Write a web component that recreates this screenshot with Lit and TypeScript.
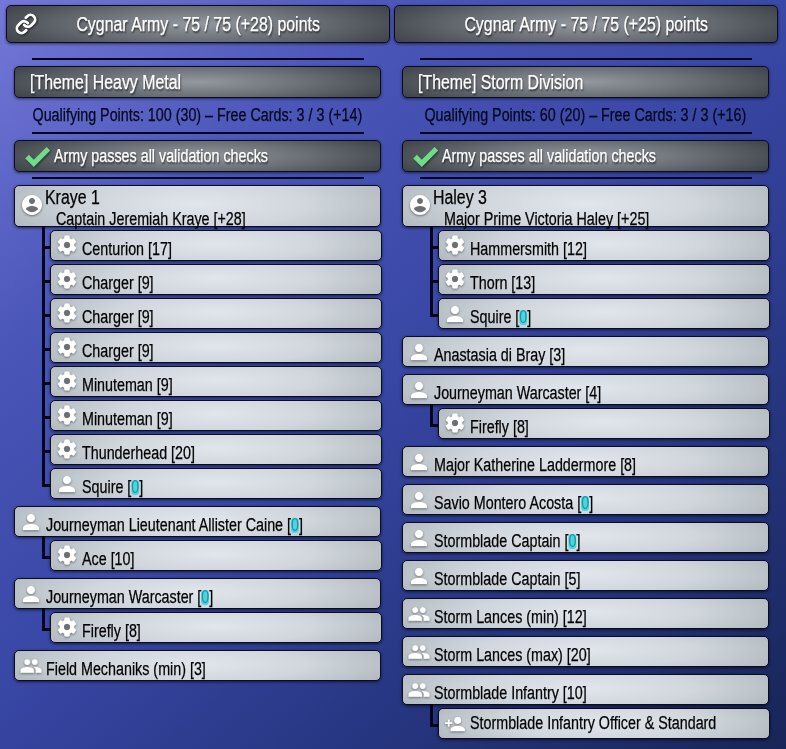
import { LitElement, html, css, svg } from "lit";
import { customElement } from "lit/decorators.js";

const P: Record<string, string> = {
  caster: "M12 2C6.48 2 2 6.48 2 12s4.48 10 10 10 10-4.48 10-10S17.52 2 12 2zm0 3c1.66 0 3 1.34 3 3s-1.34 3-3 3-3-1.34-3-3 1.34-3 3-3zm0 14.2c-2.5 0-4.71-1.28-6-3.22.03-1.99 4-3.08 6-3.08 1.99 0 5.97 1.09 6 3.08-1.29 1.94-3.5 3.22-6 3.22z",
  gear: "M19.43 12.98c.04-.32.07-.64.07-.98s-.03-.66-.07-.98l2.11-1.65c.19-.15.24-.42.12-.64l-2-3.46c-.12-.22-.39-.3-.61-.22l-2.49 1c-.52-.4-1.08-.73-1.69-.98l-.38-2.65C14.46 2.18 14.25 2 14 2h-4c-.25 0-.46.18-.49.42l-.38 2.65c-.61.25-1.17.59-1.69.98l-2.49-1c-.23-.09-.49 0-.61.22l-2 3.46c-.13.22-.07.49.12.64l2.11 1.65c-.04.32-.07.65-.07.98s.03.66.07.98l-2.11 1.65c-.19.15-.24.42-.12.64l2 3.46c.12.22.39.3.61.22l2.49-1c.52.4 1.08.73 1.69.98l.38 2.65c.03.24.24.42.49.42h4c.25 0 .46-.18.49-.42l.38-2.65c.61-.25 1.17-.59 1.69-.98l2.49 1c.23.09.49 0 .61-.22l2-3.46c.12-.22.07-.49-.12-.64l-2.11-1.65zM12 15.5c-1.93 0-3.5-1.57-3.5-3.5s1.57-3.5 3.5-3.5 3.5 1.57 3.5 3.5-1.57 3.5-3.5 3.5z",
  person: "M12 12c2.21 0 4-1.79 4-4s-1.79-4-4-4-4 1.79-4 4 1.79 4 4 4zm0 2c-2.67 0-8 1.34-8 4v2h16v-2c0-2.66-5.33-4-8-4z",
  people: "M16 11c1.66 0 2.99-1.34 2.99-3S17.66 5 16 5c-1.66 0-3 1.34-3 3s1.34 3 3 3zm-8 0c1.66 0 2.99-1.34 2.99-3S9.66 5 8 5C6.34 5 5 6.34 5 8s1.34 3 3 3zm0 2c-2.33 0-7 1.17-7 3.5V19h14v-2.5c0-2.33-4.67-3.5-7-3.5zm8 0c-.29 0-.62.02-.97.05 1.16.84 1.97 1.97 1.97 3.45V19h6v-2.5c0-2.33-4.67-3.5-7-3.5z",
  add: "M15 12c2.21 0 4-1.79 4-4s-1.79-4-4-4-4 1.79-4 4 1.79 4 4 4zm-9-2V7H4v3H1v2h3v3h2v-3h3v-2H6zm9 4c-2.67 0-8 1.34-8 4v2h16v-2c0-2.66-5.33-4-8-4z",
};

const icon = (k: string) =>
  html`<svg class="ic ${k}" viewBox="0 0 24 24">${svg`<path d=${P[k]}></path>${
    k === "gear" ? svg`<circle cx="12" cy="12" r="3.2" fill="#6b7076" stroke="none"></circle>` : ""
  }`}</svg>`;

const casterIcon = () =>
  html`<svg class="ic caster" viewBox="0 0 24 24">${svg`<circle cx="12" cy="12" r="9" fill="#6b7076"></circle><path d=${P.caster}></path>`}</svg>`;

interface Row { i: string; t: string; z?: boolean; hi?: boolean; kids?: Row[] }
interface Army { pts: string; theme: string; q: string; caster: string; sub: string; kids: Row[]; rows: Row[] }

const gear = (t: string): Row => ({ i: "gear", t });

const armies: Army[] = [
  {
    pts: "Cygnar Army - 75 / 75 (+28) points",
    theme: "[Theme] Heavy Metal",
    q: "Qualifying Points: 100 (30) – Free Cards: 3 / 3 (+14)",
    caster: "Kraye 1",
    sub: "Captain Jeremiah Kraye [+28]",
    kids: [
      gear("Centurion [17]"), gear("Charger [9]"), gear("Charger [9]"), gear("Charger [9]"),
      gear("Minuteman [9]"), gear("Minuteman [9]"), gear("Thunderhead [20]"),
      { i: "person", t: "Squire", z: true },
    ],
    rows: [
      { i: "person", t: "Journeyman Lieutenant Allister Caine", z: true, kids: [gear("Ace [10]")] },
      { i: "person", t: "Journeyman Warcaster", z: true, kids: [gear("Firefly [8]")] },
      { i: "people", t: "Field Mechaniks (min) [3]" },
    ],
  },
  {
    pts: "Cygnar Army - 75 / 75 (+25) points",
    theme: "[Theme] Storm Division",
    q: "Qualifying Points: 60 (20) – Free Cards: 3 / 3 (+16)",
    caster: "Haley 3",
    sub: "Major Prime Victoria Haley [+25]",
    kids: [gear("Hammersmith [12]"), gear("Thorn [13]"), { i: "person", t: "Squire", z: true }],
    rows: [
      { i: "person", t: "Anastasia di Bray [3]" },
      { i: "person", t: "Journeyman Warcaster [4]", kids: [gear("Firefly [8]")] },
      { i: "person", t: "Major Katherine Laddermore [8]" },
      { i: "person", t: "Savio Montero Acosta", z: true },
      { i: "person", t: "Stormblade Captain", z: true },
      { i: "person", t: "Stormblade Captain [5]" },
      { i: "people", t: "Storm Lances (min) [12]" },
      { i: "people", t: "Storm Lances (max) [20]" },
      { i: "people", t: "Stormblade Infantry [10]", kids: [{ i: "add", t: "Stormblade Infantry Officer & Standard", hi: true }] },
    ],
  },
];

@customElement("app-root")
export class AppRoot extends LitElement {
  static styles = css`
    :host {
      display: block;
      width: 786px;
      height: 749px;
      overflow: hidden;
      font-family: "Liberation Sans", sans-serif;
      background: linear-gradient(140deg, #7478d8 0%, #4a56b8 25%, #3846a4 50%, #26357f 75%, #182558 100%);
      color: #000;
    }
    .cols { display: grid; grid-template-columns: 388px 388px; padding: 5px 0 0 6px; }
    .n {
      display: inline-block; white-space: nowrap;
      transform: scaleX(.795); transform-origin: 0 50%;
      -webkit-text-stroke: .25px currentColor;
    }
    .hdr {
      height: 38px; width: 384px; box-sizing: border-box;
      display: flex; align-items: center; position: relative;
      justify-content: center;
      font-size: 20px; color: #fff;
    }
    .hdr .n, .q .n { transform-origin: 50% 50%; }
    .dark {
      background: radial-gradient(ellipse 60% 95% at 50% 50%, #94999f 0%, #6a6f76 50%, #3c4148 100%);
      border: 1px solid #0a0d20; border-radius: 5px;
      box-shadow: 0 1px 3px rgba(0,0,0,.55);
      color: #fff; text-shadow: 1px 2px 2px rgba(0,0,0,.6);
    }
    .link { position: absolute; left: 8px; top: 7px; width: 22px; height: 22px; fill: none; stroke: #fff; stroke-width: 3; stroke-linecap: round; filter: drop-shadow(1px 1px 1px rgba(0,0,0,.6)); }
    .col { width: 367px; margin: 15px 0 0 8px; }
    .rule { height: 2px; background: #04061c; margin: 0 17px 0 18px; }
    .bar { height: 32px; box-sizing: border-box; margin-top: 6px; display: flex; align-items: center; font-size: 18px; }
    .bar.theme { padding-left: 15px; font-size: 20px; }
    .bar.valid { padding-left: 39px; position: relative; }
    .tick { position: absolute; left: 10px; top: 2px; width: 25px; height: 25px; fill: none; stroke: #6fdc86; stroke-width: 5; filter: drop-shadow(1px 1px 1px rgba(0,0,0,.5)); }
    .q { height: 34px; display: flex; align-items: center; justify-content: center; font-size: 18px; color: #05071a; }
    .rule.r3 { margin-top: 5px; margin-bottom: 6px; }
    .card {
      background: radial-gradient(ellipse 55% 110% at 50% 45%, #e0e6ec 0%, #d0d6dc 55%, #b4bcc2 100%);
      border: 1px solid #0a0d20; border-radius: 5px;
      box-shadow: 0 1px 3px rgba(0,0,0,.6);
      box-sizing: border-box; position: relative;
    }
    .row { height: 31px; font-size: 18px; display: flex; }
    .row .name { padding-top: 7px; line-height: 22px; white-space: nowrap; display: block; }
    .row .name.hi { padding-top: 3px; }
    .row .ic { width: 24px; height: 24px; margin: 3px 3px 0 4px; flex: none; }
    .ic { fill: #fff; filter: drop-shadow(0 1px 1px rgba(0,0,0,.45)); }
    .ic.gear { stroke: #fff; stroke-width: .7; transform: translateY(-1px) scale(.92); }
    .ic.person { stroke: #fff; stroke-width: .3; }
    .ic.people { stroke: #fff; stroke-width: .3; transform: scale(.95); }
    .ic.add { transform: scale(.9); }
    .caster { height: 42px; display: flex; }
    .caster .ic { width: 24px; height: 24px; margin: 7px 0 0 5px; flex: none; }
    .caster .tit { font-size: 20px; line-height: 23px; margin-left: 1px; }
    .caster .sub { font-size: 18px; line-height: 18px; margin: 1px 0 0 12px; white-space: nowrap; }
    .group { display: flex; flex-direction: column; gap: 3px; margin-bottom: 7px; }
    .kids { display: flex; flex-direction: column; gap: 3px; margin-left: 36px; margin-right: -1px; }
    .kid { position: relative; }
    .kid::before {
      content: ""; position: absolute; left: -8px; top: -4px; width: 8px; height: 23px;
      border-left: 3px solid #04061c; border-bottom: 3px solid #04061c; box-sizing: border-box;
    }
    .kid:not(:last-child)::after {
      content: ""; position: absolute; left: -8px; top: 0; width: 3px; height: 35px; background: #04061c;
    }
    .z {
      display: inline-block; line-height: 15px; background: #4bd5df; color: #1796a4;
      border-radius: 4px; -webkit-text-stroke: 0;
    }
  `;

  private name(r: Row) {
    return html`<span class="name ${r.hi ? "hi" : ""}"><span class="n">${r.t}${r.z ? html` [<span class="z">0</span>]` : ""}</span></span>`;
  }

  private kid(r: Row) {
    return html`<div class="kid"><div class="card row">${icon(r.i)}${this.name(r)}</div></div>`;
  }

  private col(a: Army) {
    return html`<div>
      <div class="hdr dark">
        ${a === armies[0]
          ? html`<svg class="link" viewBox="0 0 24 24">${svg`<path d="M10 13a5 5 0 0 0 7.54.54l3-3a5 5 0 0 0-7.07-7.07l-1.72 1.71"></path><path d="M14 11a5 5 0 0 0-7.54-.54l-3 3a5 5 0 0 0 7.07 7.07l1.71-1.71"></path>`}</svg>`
          : ""}
        <span class="n">${a.pts}</span>
      </div>
      <div class="col">
        <div class="rule"></div>
        <div class="bar dark theme"><span class="n">${a.theme}</span></div>
        <div class="q"><span class="n">${a.q}</span></div>
        <div class="rule"></div>
        <div class="bar dark valid">
          <svg class="tick" viewBox="0 0 24 24">${svg`<path d="M2 13l6.5 6.5L22.5 5.5"></path>`}</svg>
          <span class="n">Army passes all validation checks</span>
        </div>
        <div class="rule r3"></div>
        <div class="group">
          <div class="card caster">
            ${casterIcon()}
            <div><div class="tit"><span class="n">${a.caster}</span></div><div class="sub"><span class="n">${a.sub}</span></div></div>
          </div>
          <div class="kids">${a.kids.map((k) => this.kid(k))}</div>
        </div>
        ${a.rows.map(
          (r) => html`<div class="group">
            <div class="card row">${icon(r.i)}${this.name(r)}</div>
            ${r.kids ? html`<div class="kids">${r.kids.map((k) => this.kid(k))}</div>` : ""}
          </div>`
        )}
      </div>
    </div>`;
  }

  render() {
    return html`<div class="cols">${armies.map((a) => this.col(a))}</div>`;
  }
}
